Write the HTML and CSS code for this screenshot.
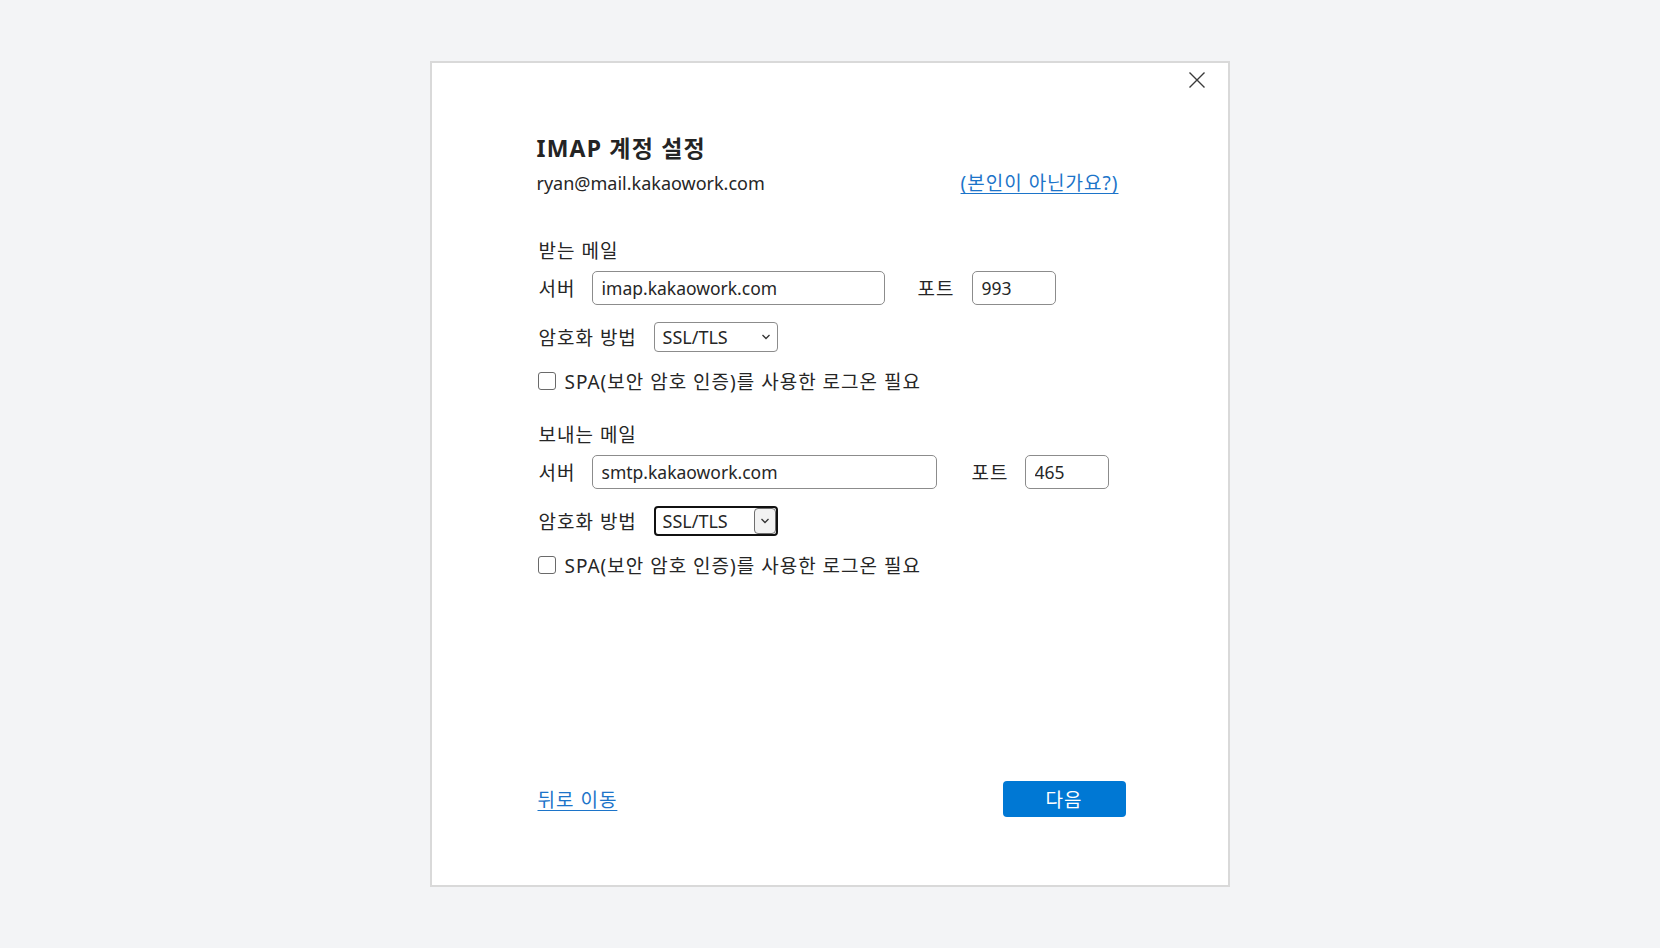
FILE: index.html
```html
<!DOCTYPE html>
<html lang="ko">
<head>
<meta charset="utf-8">
<title>IMAP 계정 설정</title>
<link rel="stylesheet" href="styles.css">
</head>
<body>
<div class="dialog">
  <button class="close" aria-label="닫기">
    <svg width="18" height="18" viewBox="0 0 18 18"><path d="M1.5 1.5 L16.5 16.5 M16.5 1.5 L1.5 16.5" stroke="#3a3a3a" stroke-width="1.4" fill="none"/></svg>
  </button>
  <h1 class="title">IMAP 계정 설정</h1>
  <div class="account-row">
    <span class="email">ryan@mail.kakaowork.com</span>
    <a class="link ko" href="#">(본인이 아닌가요?)</a>
  </div>

  <section class="section">
    <div class="section-label ko">받는 메일</div>
    <div class="server-row">
      <span class="field-label ko">서버</span>
      <input class="text-input server-in" type="text" value="imap.kakaowork.com">
      <span class="port-label ko">포트</span>
      <input class="text-input port-in" type="text" value="993">
    </div>
    <div class="enc-row">
      <span class="enc-label ko">암호화 방법</span>
      <div class="select">
        <span class="select-value">SSL/TLS</span>
        <span class="select-arrow"><svg width="10" height="6" viewBox="0 0 10 6"><path d="M1.5 1 L5 4.5 L8.5 1" stroke="#333" stroke-width="1.3" fill="none"/></svg></span>
      </div>
    </div>
    <label class="check-row"><span class="checkbox"></span><span class="ko">SPA(보안 암호 인증)를 사용한 로그온 필요</span></label>
  </section>

  <section class="section section-out">
    <div class="section-label ko">보내는 메일</div>
    <div class="server-row">
      <span class="field-label ko">서버</span>
      <input class="text-input server-in wide" type="text" value="smtp.kakaowork.com">
      <span class="port-label ko">포트</span>
      <input class="text-input port-in" type="text" value="465">
    </div>
    <div class="enc-row">
      <span class="enc-label ko">암호화 방법</span>
      <div class="select focused">
        <span class="select-value">SSL/TLS</span>
        <span class="select-arrow boxed"><svg width="10" height="6" viewBox="0 0 10 6"><path d="M1.5 1 L5 4.5 L8.5 1" stroke="#333" stroke-width="1.3" fill="none"/></svg></span>
      </div>
    </div>
    <label class="check-row"><span class="checkbox"></span><span class="ko">SPA(보안 암호 인증)를 사용한 로그온 필요</span></label>
  </section>

  <div class="footer">
    <a class="link ko" href="#">뒤로 이동</a>
    <button class="primary ko">다음</button>
  </div>
</div>
</body>
</html>
```

FILE: styles.css
```css
* { box-sizing: border-box; }
html, body { margin: 0; padding: 0; }
body {
  width: 1660px;
  height: 948px;
  background: #f3f4f6;
  display: flex;
  align-items: center;
  justify-content: center;
  font-family: "Noto Sans", "Noto Sans CJK KR", sans-serif;
  color: #262626;
}
.ko {
  font-size: 19px;
  letter-spacing: 1px;
}
.dialog {
  position: relative;
  width: 800px;
  height: 826px;
  margin-left: -1px;
  background: #fff;
  border: 2px solid #d9d9d9;
  padding: 71px 0 0 105px;
  display: flex;
  flex-direction: column;
}
.close {
  position: absolute;
  top: 6px;
  right: 20px;
  width: 22px;
  height: 22px;
  padding: 2px;
  border: 0;
  background: transparent;
  display: flex;
  align-items: center;
  justify-content: center;
}
.title {
  margin: 0;
  font-size: 23px;
  letter-spacing: 1.2px;
  line-height: 28px;
  font-weight: 700;
  color: #242424;
}
.account-row {
  margin-top: 8px;
  width: 582px;
  display: flex;
  justify-content: space-between;
  align-items: center;
  line-height: 26px;
}
.email { font-size: 18px; }
.link {
  color: #1c74c9;
  text-decoration: underline;
  text-underline-offset: 3px;
}
.section { margin-top: 43px; padding-left: 2px; }
.section-out { margin-top: 30px; }
.section-label {
  line-height: 24px;
}
.server-row {
  margin-top: 8px;
  display: flex;
  align-items: center;
  height: 34px;
}
.field-label {
  width: 53px;
}
.text-input {
  height: 34px;
  border: 1px solid #8c8c8c;
  border-radius: 5px;
  padding: 0 9px;
  font-family: inherit;
  font-size: 17.5px;
  color: #262626;
  background: #fff;
  outline: none;
}
.server-in { width: 293px; }
.server-in.wide { width: 345px; }
.port-label {
  margin-left: 33px;
  width: 54px;
}
.section-out .port-label { margin-left: 35px; width: 53px; }
.port-in { width: 84px; }
.enc-row {
  margin-top: 17px;
  display: flex;
  align-items: center;
  height: 30px;
}
.enc-label {
  width: 115px;
}
.select {
  width: 124px;
  height: 30px;
  border: 1px solid #8c8c8c;
  border-radius: 4px;
  display: flex;
  align-items: center;
  justify-content: space-between;
  padding: 0 1px 0 8px;
  font-size: 18px;
}
.select-arrow {
  width: 20px;
  height: 22px;
  display: flex;
  align-items: center;
  justify-content: center;
}
.select.focused {
  border: 2px solid #111;
  padding: 0 0 0 7px;
}
.select-arrow.boxed {
  width: 22px;
  height: 26px;
  border: 1px solid #6f6f6f;
  border-radius: 4px;
  background: #f2f2f2;
}
.check-row {
  margin-top: 17px;
  display: flex;
  align-items: center;
  height: 24px;
  margin-left: -1px;
}
.checkbox {
  width: 18px;
  height: 18px;
  border: 1px solid #6a6a6a;
  border-radius: 3px;
  margin-right: 9px;
  background: #fff;
}
.footer {
  margin-top: auto;
  margin-bottom: 68px;
  width: 589px;
  display: flex;
  justify-content: space-between;
  align-items: center;
  padding-left: 1px;
}
.primary {
  width: 123px;
  height: 36px;
  border: 0;
  border-radius: 4px;
  background: #0078d4;
  color: #fff;
  font-family: inherit;
}
```
